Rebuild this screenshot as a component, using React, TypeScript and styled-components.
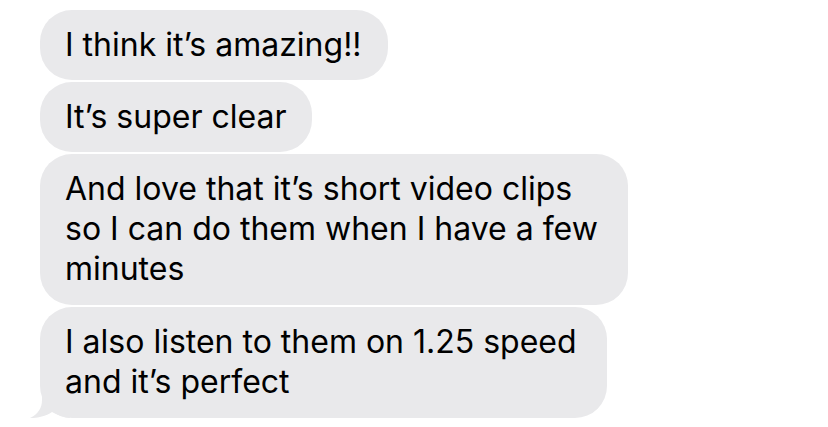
import React from 'react'
import styled, { createGlobalStyle } from 'styled-components'

const GlobalStyle = createGlobalStyle`
  html, body {
    margin: 0;
    padding: 0;
    background: #ffffff;
  }
`

const messages = [
  ['I think it’s amazing!!'],
  ['It’s super clear'],
  ['And love that it’s short video clips', 'so I can do them when I have a few', 'minutes'],
  ['I also listen to them on 1.25 speed', 'and it’s perfect'],
]

const App = () => {
  return (
    <>
      <GlobalStyle />
      <Thread>
        {messages.map((lines, i) => {
          const last = i === messages.length - 1
          return (
            <Bubble key={i} $wrapped={lines.length > 1}>
              {last && (
                <Tail viewBox="0 0 40 30" width="40" height="30">
                  <path
                    d="M12 0 L12 12 C12 20 8 26 0 30 C8 30 16 28 22 24 C28 27 34 30 40 30 L40 0 Z"
                    fill="#e9e9eb"
                  />
                </Tail>
              )}
              {lines.map((line, j) => (
                <Line key={j}>{line}</Line>
              ))}
            </Bubble>
          )
        })}
      </Thread>
    </>
  )
}

const Thread = styled.div`
  display: flex;
  flex-direction: column;
  align-items: flex-start;
  gap: 2px;
  padding: 10px 0 0 40px;
  font-family: Inter, 'Noto Sans', sans-serif;
`

const Bubble = styled.div<{ $wrapped?: boolean }>`
  position: relative;
  z-index: 0;
  background: #e9e9eb;
  color: #000000;
  border-radius: 32px;
  padding: 15px ${(p) => (p.$wrapped ? '30px' : '26px')} ${(p) => (p.$wrapped ? '16px' : '15px')} 25px;
  font-size: 32px;
  line-height: 40px;
`

const Line = styled.div`
  white-space: nowrap;
`

const Tail = styled.svg`
  position: absolute;
  z-index: -1;
  left: -10px;
  bottom: 0;
`

export default App
